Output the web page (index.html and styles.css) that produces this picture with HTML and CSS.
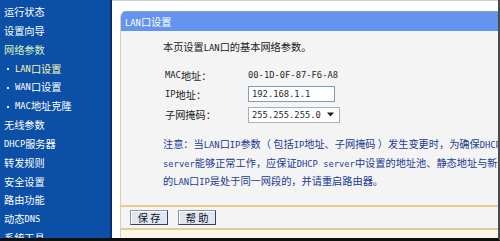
FILE: index.html
```html
<!DOCTYPE html>
<html lang="zh-CN">
<head>
<meta charset="utf-8">
<title>LAN口设置</title>
<link rel="stylesheet" href="styles.css">
</head>
<body>
<div class="screen">
  <nav class="side">
    <div class="item">运行状态</div>
    <div class="item">设置向导</div>
    <div class="item group">网络参数</div>
    <div class="item sub current"><span class="dot"></span><span class="en">LAN</span>口设置</div>
    <div class="item sub"><span class="dot"></span><span class="en">WAN</span>口设置</div>
    <div class="item sub"><span class="dot"></span><span class="en">MAC</span>地址克隆</div>
    <div class="item">无线参数</div>
    <div class="item"><span class="en">DHCP</span>服务器</div>
    <div class="item">转发规则</div>
    <div class="item">安全设置</div>
    <div class="item">路由功能</div>
    <div class="item">动态<span class="en">DNS</span></div>
    <div class="item">系统工具</div>
  </nav>
  <main class="main">
    <section class="panel">
      <header class="panel-head"><span class="en">LAN</span>口设置</header>
      <div class="panel-body">
        <p class="intro">本页设置<span class="en">LAN</span>口的基本网络参数。</p>
        <div class="form">
          <div class="label row-mac"><span class="en">MAC</span>地址：</div>
          <div class="value row-mac"><span class="en">00-1D-0F-87-F6-A8</span></div>
          <div class="label row-ip"><span class="en">IP</span>地址：</div>
          <div class="value row-ip"><div class="input"><span class="en">192.168.1.1</span></div></div>
          <div class="label row-mask">子网掩码：</div>
          <div class="value row-mask"><div class="select"><span class="en">255.255.255.0</span><svg class="arrow" width="7" height="5" viewBox="0 0 7 5"><path d="M0 0.5h7L3.5 4.5z" fill="#1b1b1b"/></svg></div></div>
        </div>
        <div class="note">
          <div class="line">注意：当<span class="en">LAN</span>口<span class="en">IP</span>参数（ 包括<span class="en">IP</span>地址、子网掩码 ）发生变更时，为确保<span class="en">DHCP</span></div>
          <div class="line"><span class="en">server</span>能够正常工作，应保证<span class="en">DHCP server</span>中设置的地址池、静态地址与新</div>
          <div class="line">的<span class="en">LAN</span>口<span class="en">IP</span>是处于同一网段的，并请重启路由器。</div>
        </div>
      </div>
      <div class="btnbar">
        <button class="btn">保 存</button>
        <button class="btn">帮 助</button>
      </div>
      <div class="foot"></div>
    </section>
  </main>
</div>
</body>
</html>
```
FILE: styles.css
```css
html, body {
  margin: 0;
  padding: 0;
  background: #ffffff;
}
body {
  width: 500px;
  height: 241px;
  overflow: hidden;
  font-family: "Noto Sans CJK SC", "Noto Sans", sans-serif;
  font-size: 10.2px;
  color: #111;
}
.en {
  font-family: "DejaVu Sans Mono", "Liberation Mono", monospace;
  font-size: 8.8px;
}
.screen {
  display: flex;
  width: 500px;
  height: 241px;
  box-sizing: border-box;
  border-bottom: 3px solid #101010;
  border-right: 2px solid #4a4a4a;
}
.side {
  width: 110px;
  flex: none;
  background: #0b4fa6;
  border-right: 2px solid #0a2d6b;
  padding-top: 3px;
  color: #ffffff;
  overflow: hidden;
}
.item {
  height: 18.85px;
  line-height: 18.85px;
  padding-left: 4px;
  white-space: nowrap;
  display: flex;
  align-items: center;
}
.item.group {
  color: #d4f2bc;
}
.item.sub {
  padding-left: 7px;
}
.item.current {
  color: #fbf6b0;
}
.dot {
  width: 2px;
  height: 2px;
  background: #e8f0ff;
  margin-right: 6px;
}
.main {
  flex: 1;
  min-width: 0;
  padding: 11px 0 0 8px;
  border-top: 1px solid #d2d2d2;
  box-sizing: border-box;
  display: flex;
}
.panel {
  flex: 1;
  display: flex;
  flex-direction: column;
  min-width: 0;
  margin-top: -1px;
  border-left: 1px solid #e2cca6;
  border-top-left-radius: 6px;
  overflow: hidden;
}
.panel-head {
  height: 20px;
  flex: none;
  line-height: 20px;
  background: #6494ef;
  border-top: 1px solid #8e9fc0;
  box-sizing: border-box;
  color: #ffffff;
  padding-left: 4px;
  white-space: nowrap;
}
.panel-body {
  flex: 1;
  min-height: 0;
  background: #f4f4f4;
  padding: 7px 0 0 42px;
  overflow: hidden;
  white-space: nowrap;
}
.intro {
  margin: 0;
  height: 18px;
  line-height: 18px;
  color: #1a1a1a;
}
.form {
  display: grid;
  grid-template-columns: 83px auto;
  grid-template-rows: 18px 20px 21px;
  margin-top: 10px;
  padding-left: 2px;
}
.label, .value {
  display: flex;
  align-items: center;
  color: #222;
}
.value .en {
  color: #2a2a2a;
}
.input {
  width: 87px;
  height: 16px;
  box-sizing: border-box;
  border: 1px solid #7f9db9;
  background: #ffffff;
  display: flex;
  align-items: center;
  padding-left: 3px;
}
.select {
  width: 92px;
  height: 16px;
  box-sizing: border-box;
  border: 1px solid #a9b0b8;
  background: #ffffff;
  display: flex;
  align-items: center;
  justify-content: space-between;
  padding: 0 5px 0 3px;
}
.note {
  margin-top: 10px;
  color: #1b3b96;
}
.note .line {
  height: 18.5px;
  line-height: 18.5px;
  white-space: nowrap;
}
.btnbar {
  height: 21px;
  flex: none;
  background: #f4f4f4;
  border-top: 2px solid #e6cb9f;
  border-bottom: 2px solid #e6cb9f;
  box-shadow: inset 0 1px 0 #fdf0da;
  display: flex;
  align-items: flex-start;
  gap: 10px;
  padding: 3px 0 0 9px;
  box-sizing: border-box;
}
.btnbar {
  height: 25px;
}
.btn {
  width: 38px;
  height: 15px;
  padding: 0;
  margin: 0;
  font-family: "Noto Sans CJK SC", sans-serif;
  font-size: 10.2px;
  line-height: 13px;
  color: #111;
  background: #dfe5f3;
  border: 1px solid #3a3f55;
  border-top-color: #8a90a8;
  border-left-color: #8a90a8;
  box-shadow: inset 1px 1px 0 #ffffff;
}
.foot {
  height: 8px;
  flex: none;
  background: #fdf7ea;
}
```
